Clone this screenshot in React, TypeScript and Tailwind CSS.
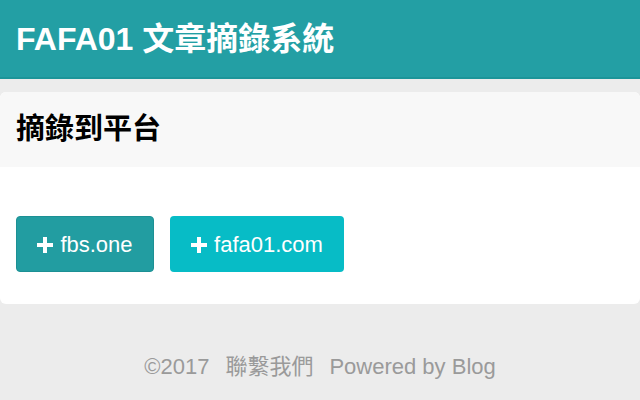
const sans = "font-['Liberation_Sans','Noto_Sans_CJK_TC',sans-serif]";

function PlusIcon() {
  return (
    <svg width="16" height="16" viewBox="0 0 16 16" className="mr-[7px] mt-0.5">
      <path d="M6 0h4v6h6v4h-6v6H6v-6H0V6h6z" fill="currentColor" />
    </svg>
  );
}

export default function App() {
  return (
    <div className={`w-[640px] h-[400px] bg-[#ececec] ${sans} flex flex-col`}>
      <header className="h-[79px] bg-[#239fa4] border-b-2 border-[#1c9599] flex items-center px-4">
        <h1 className="text-[32px] font-bold text-white">FAFA01 文章摘錄系統</h1>
      </header>

      <section className="mt-[13px] bg-white rounded-[6px] overflow-hidden h-[212px] flex flex-col">
        <div className="h-[75px] bg-[#f8f8f8] flex items-center px-4">
          <h2 className="text-[29px] font-bold text-black">摘錄到平台</h2>
        </div>
        <div className="flex gap-4 px-4 pt-[49px]">
          <button className="h-[56px] w-[138px] rounded-[4px] bg-[#229da1] border border-[#1c9094] text-white text-[22px] flex items-center justify-center">
            <PlusIcon />
            fbs.one
          </button>
          <button className="h-[56px] w-[174px] rounded-[4px] bg-[#07bcc6] text-white text-[22px] flex items-center justify-center">
            <PlusIcon />
            fafa01.com
          </button>
        </div>
      </section>

      <footer className="flex-1 flex items-start justify-center pt-[46px] text-[#9a9a9a] text-[22px] gap-4">
        <span>©2017</span>
        <span>聯繫我們</span>
        <span>Powered by Blog</span>
      </footer>
    </div>
  );
}
